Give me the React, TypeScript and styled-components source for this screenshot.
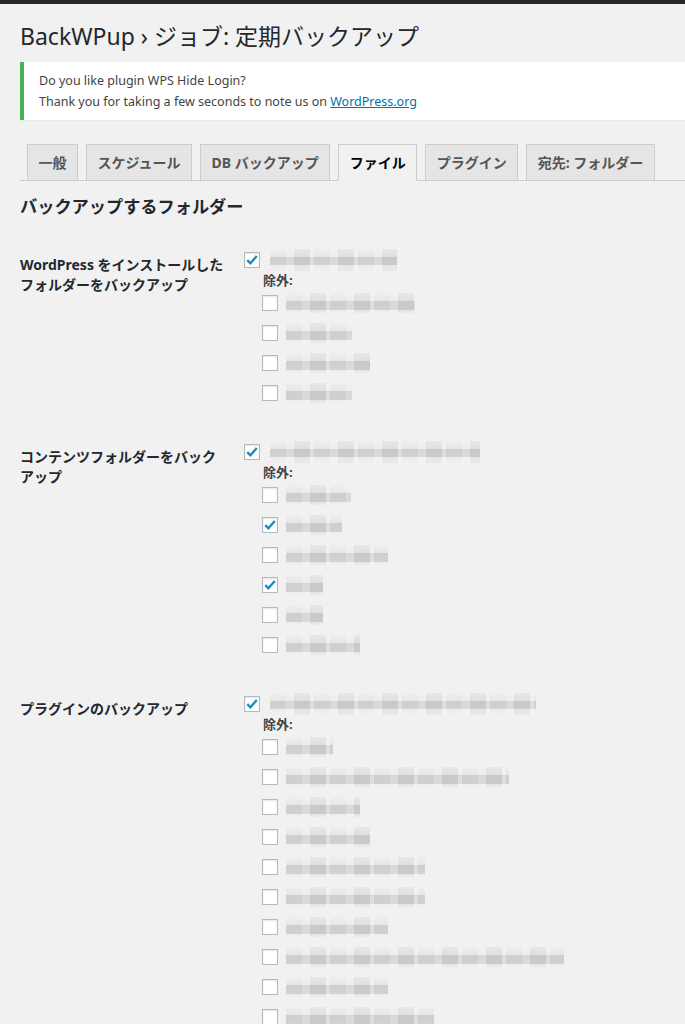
import React from 'react';
import styled, { createGlobalStyle } from 'styled-components';

const GlobalStyle = createGlobalStyle`
  body {
    margin: 0;
    background: #f1f1f1;
    color: #23282d;
    font-family: "Noto Sans", "Noto Sans CJK JP", sans-serif;
    font-size: 13px;
  }
`;

const AdminBar = styled.div`
  height: 4px;
  background: #23282d;
`;

const Wrap = styled.div`
  padding-left: 20px;
  padding-bottom: 40px;
`;

const Title = styled.h1`
  margin: 17px 0 0;
  font-size: 23px;
  font-weight: 400;
  line-height: 30px;
  color: #23282d;
`;

const Notice = styled.div`
  margin-top: 11px;
  background: #fff;
  border-left: 4px solid #46b450;
  box-shadow: 0 1px 1px rgba(0, 0, 0, 0.04);
  padding: 8px 12px 8px 15px;
  color: #444;
  font-size: 12.5px;
  line-height: 21px;

  p {
    margin: 0;
  }

  a {
    color: #0073aa;
  }
`;

const TabBar = styled.nav`
  margin-top: 24px;
  padding-left: 7px;
  display: flex;
  gap: 8px;
  border-bottom: 1px solid #ccc;
`;

const Tab = styled.span<{ $active?: boolean }>`
  margin-bottom: -1px;
  padding: 5px 10.5px;
  font-size: 14px;
  font-weight: 700;
  line-height: 25px;
  border: 1px solid #ccc;
  border-bottom-color: ${(p) => (p.$active ? '#f1f1f1' : '#ccc')};
  background: ${(p) => (p.$active ? '#f1f1f1' : '#e5e5e5')};
  color: ${(p) => (p.$active ? '#000' : '#555')};
  white-space: nowrap;
`;

const Heading = styled.h2`
  margin: 14px 0 0;
  font-size: 17.2px;
  line-height: 24px;
  font-weight: 700;
`;

const Sections = styled.div`
  margin-top: 29px;
  display: flex;
  flex-direction: column;
  gap: 32px;
`;

const Row = styled.div`
  display: grid;
  grid-template-columns: 224px 1fr;
`;

const Label = styled.div`
  padding: 7px 16px 0 0;
  font-size: 14px;
  font-weight: 700;
  line-height: 20px;
`;

const Field = styled.div`
  display: flex;
  flex-direction: column;
`;

const TopLine = styled.div`
  height: 24px;
  display: flex;
  align-items: center;
  gap: 10px;
`;

const ExcludeTitle = styled.div`
  margin-left: 19px;
  height: 16px;
  line-height: 16px;
  font-size: 13px;
  font-weight: 700;
  color: #444;
`;

const ExcludeItem = styled.div`
  height: 30px;
  margin-left: 18px;
  display: flex;
  align-items: center;
  gap: 8px;
`;

const Box = styled.span`
  width: 16px;
  height: 16px;
  box-sizing: border-box;
  flex: none;
  display: flex;
  align-items: center;
  justify-content: center;
  background: #fff;
  border: 1px solid #b4b9be;
  box-shadow: inset 0 1px 2px rgba(0, 0, 0, 0.1);
`;

const Blur = styled.span<{ $tall?: boolean }>`
  display: block;
  height: ${(p) => (p.$tall ? 22 : 20)}px;
  background:
    repeating-linear-gradient(
      90deg,
      rgba(255, 255, 255, 0) 0 16px,
      rgba(255, 255, 255, 0.22) 16px 24px,
      rgba(0, 0, 0, 0.03) 24px 40px,
      rgba(255, 255, 255, 0.3) 40px 44px
    ),
    linear-gradient(
      to bottom,
      #eeeeee 0,
      #e6e6e6 ${(p) => (p.$tall ? 38 : 42)}%,
      #cecece ${(p) => (p.$tall ? 38 : 42)}%,
      #d1d1d1 ${(p) => (p.$tall ? 72 : 84)}%,
      #ececec ${(p) => (p.$tall ? 72 : 84)}%,
      #f0f0f0 100%
    );
`;

function Checkbox({ checked }: { checked?: boolean }): JSX.Element {
  return (
    <Box>
      {checked && (
        <svg width="14" height="14" viewBox="0 0 14 14">
          <path d="M2.3 7.2 L5.4 10.3 L11.8 3" fill="none" stroke="#1e8cbe" strokeWidth="2.4" />
        </svg>
      )}
    </Box>
  );
}

type Folder = {
  label: string;
  width: number;
  excludes: { width: number; checked?: boolean }[];
};

const folders: Folder[] = [
  {
    label: 'WordPress をインストールしたフォルダーをバックアップ',
    width: 127,
    excludes: [{ width: 129 }, { width: 66 }, { width: 84 }, { width: 66 }],
  },
  {
    label: 'コンテンツフォルダーをバックアップ',
    width: 210,
    excludes: [
      { width: 65 },
      { width: 56, checked: true },
      { width: 102 },
      { width: 37, checked: true },
      { width: 37 },
      { width: 74 },
    ],
  },
  {
    label: 'プラグインのバックアップ',
    width: 266,
    excludes: [
      { width: 47 },
      { width: 223 },
      { width: 74 },
      { width: 84 },
      { width: 139 },
      { width: 139 },
      { width: 102 },
      { width: 278 },
      { width: 102 },
      { width: 148 },
    ],
  },
];

const tabs = ['一般', 'スケジュール', 'DB バックアップ', 'ファイル', 'プラグイン', '宛先: フォルダー'];

export default function App(): JSX.Element {
  return (
    <>
      <GlobalStyle />
      <AdminBar />
      <Wrap>
        <Title>BackWPup › ジョブ: 定期バックアップ</Title>
        <Notice>
          <p>Do you like plugin WPS Hide Login?</p>
          <p>
            Thank you for taking a few seconds to note us on <a href="#">WordPress.org</a>
          </p>
        </Notice>
        <TabBar>
          {tabs.map((t) => (
            <Tab key={t} $active={t === 'ファイル'}>
              {t}
            </Tab>
          ))}
        </TabBar>
        <Heading>バックアップするフォルダー</Heading>
        <Sections>
          {folders.map((f) => (
            <Row key={f.label}>
              <Label>{f.label}</Label>
              <Field>
                <TopLine>
                  <Checkbox checked />
                  <Blur $tall style={{ width: f.width }} />
                </TopLine>
                <ExcludeTitle>除外:</ExcludeTitle>
                {f.excludes.map((e, i) => (
                  <ExcludeItem key={i}>
                    <Checkbox checked={e.checked} />
                    <Blur style={{ width: e.width }} />
                  </ExcludeItem>
                ))}
              </Field>
            </Row>
          ))}
        </Sections>
      </Wrap>
    </>
  );
}
